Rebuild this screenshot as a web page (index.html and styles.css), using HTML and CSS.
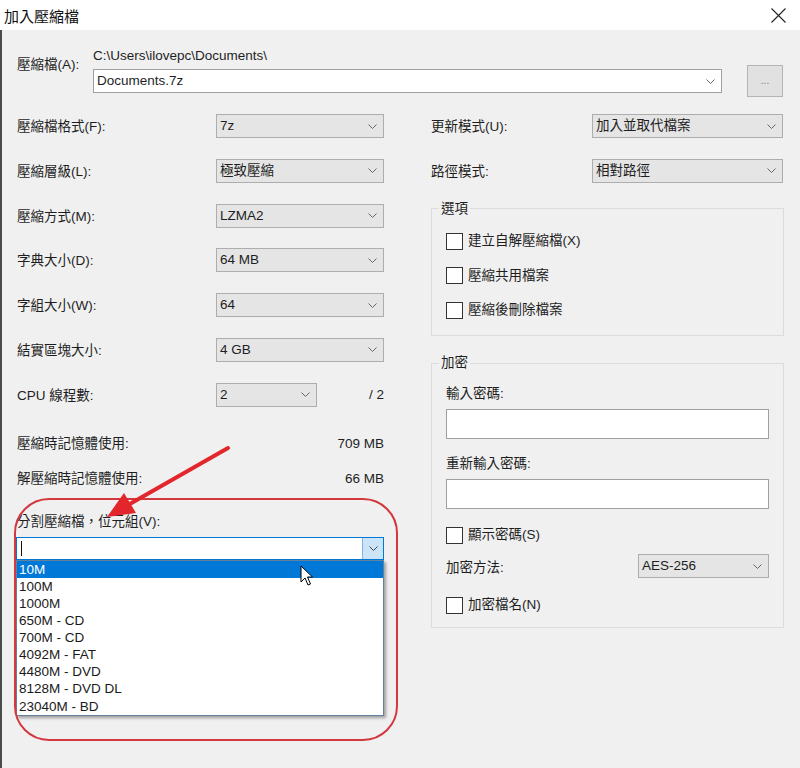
FILE: index.html
```html
<!DOCTYPE html>
<html lang="zh-Hant">
<head>
<meta charset="utf-8">
<title>加入壓縮檔</title>
<link rel="stylesheet" href="styles.css">
</head>
<body>
<div class="window">
  <div class="titlebar">
    <span class="title">加入壓縮檔</span>
    <svg class="close" width="15" height="15" viewBox="0 0 15 15"><path d="M0.5 0.5 L14.5 14.5 M14.5 0.5 L0.5 14.5" stroke="#222" stroke-width="1.1" fill="none"/></svg>
  </div>
  <div class="content">
    <div class="archive-row">
      <div class="archive-label">壓縮檔(A):</div>
      <div class="archive-main">
        <div class="path">C:\Users\ilovepc\Documents\</div>
        <div class="archive-controls">
          <div class="combo edit archive-combo"><span class="val">Documents.7z</span><svg class="chev" width="9" height="5" viewBox="0 0 9 5"><path d="M0.5 0.5 L4.5 4.5 L8.5 0.5" fill="none" stroke="#666" stroke-width="1"/></svg></div>
          <div class="browse">...</div>
        </div>
      </div>
    </div>

    <div class="columns">
      <div class="col-left">
        <div class="form-grid left-grid">
          <div class="lbl">壓縮檔格式(F):</div>
          <div class="combo"><span class="val">7z</span><svg class="chev" width="9" height="5" viewBox="0 0 9 5"><path d="M0.5 0.5 L4.5 4.5 L8.5 0.5" fill="none" stroke="#666" stroke-width="1"/></svg></div>
          <div class="lbl">壓縮層級(L):</div>
          <div class="combo"><span class="val">極致壓縮</span><svg class="chev" width="9" height="5" viewBox="0 0 9 5"><path d="M0.5 0.5 L4.5 4.5 L8.5 0.5" fill="none" stroke="#666" stroke-width="1"/></svg></div>
          <div class="lbl">壓縮方式(M):</div>
          <div class="combo"><span class="val">LZMA2</span><svg class="chev" width="9" height="5" viewBox="0 0 9 5"><path d="M0.5 0.5 L4.5 4.5 L8.5 0.5" fill="none" stroke="#666" stroke-width="1"/></svg></div>
          <div class="lbl">字典大小(D):</div>
          <div class="combo"><span class="val">64 MB</span><svg class="chev" width="9" height="5" viewBox="0 0 9 5"><path d="M0.5 0.5 L4.5 4.5 L8.5 0.5" fill="none" stroke="#666" stroke-width="1"/></svg></div>
          <div class="lbl">字組大小(W):</div>
          <div class="combo"><span class="val">64</span><svg class="chev" width="9" height="5" viewBox="0 0 9 5"><path d="M0.5 0.5 L4.5 4.5 L8.5 0.5" fill="none" stroke="#666" stroke-width="1"/></svg></div>
          <div class="lbl">結實區塊大小:</div>
          <div class="combo"><span class="val">4 GB</span><svg class="chev" width="9" height="5" viewBox="0 0 9 5"><path d="M0.5 0.5 L4.5 4.5 L8.5 0.5" fill="none" stroke="#666" stroke-width="1"/></svg></div>
          <div class="lbl">CPU 線程數:</div>
          <div class="cpu-cell">
            <div class="combo cpu-combo"><span class="val">2</span><svg class="chev" width="9" height="5" viewBox="0 0 9 5"><path d="M0.5 0.5 L4.5 4.5 L8.5 0.5" fill="none" stroke="#666" stroke-width="1"/></svg></div>
            <span class="cpu-max">/ 2</span>
          </div>
        </div>

        <div class="mem-row mem-first"><span>壓縮時記憶體使用:</span><span>709 MB</span></div>
        <div class="mem-row mem-second"><span>解壓縮時記憶體使用:</span><span>66 MB</span></div>

        <div class="split-label">分割壓縮檔，位元組(V):</div>
        <div class="split-wrap">
          <div class="split-combo">
            <span class="caret"></span>
            <span class="split-btn"><svg width="9" height="5" viewBox="0 0 9 5"><path d="M0.5 0.5 L4.5 4.5 L8.5 0.5" fill="none" stroke="#444" stroke-width="1"/></svg></span>
          </div>
          <ul class="split-list">
            <li class="sel">10M</li>
            <li>100M</li>
            <li>1000M</li>
            <li>650M - CD</li>
            <li>700M - CD</li>
            <li>4092M - FAT</li>
            <li>4480M - DVD</li>
            <li>8128M - DVD DL</li>
            <li>23040M - BD</li>
          </ul>
        </div>
      </div>

      <div class="col-right">
        <div class="form-grid right-grid">
          <div class="lbl">更新模式(U):</div>
          <div class="combo"><span class="val">加入並取代檔案</span><svg class="chev" width="9" height="5" viewBox="0 0 9 5"><path d="M0.5 0.5 L4.5 4.5 L8.5 0.5" fill="none" stroke="#666" stroke-width="1"/></svg></div>
          <div class="lbl">路徑模式:</div>
          <div class="combo"><span class="val">相對路徑</span><svg class="chev" width="9" height="5" viewBox="0 0 9 5"><path d="M0.5 0.5 L4.5 4.5 L8.5 0.5" fill="none" stroke="#666" stroke-width="1"/></svg></div>
        </div>

        <fieldset class="group options">
          <legend>選項</legend>
          <div class="check first"><span class="box"></span><span>建立自解壓縮檔(X)</span></div>
          <div class="check"><span class="box"></span><span>壓縮共用檔案</span></div>
          <div class="check"><span class="box"></span><span>壓縮後刪除檔案</span></div>
        </fieldset>

        <fieldset class="group encrypt">
          <legend>加密</legend>
          <div class="field-label pw1">輸入密碼:</div>
          <div class="textbox"></div>
          <div class="field-label pw2">重新輸入密碼:</div>
          <div class="textbox"></div>
          <div class="check show-pw"><span class="box"></span><span>顯示密碼(S)</span></div>
          <div class="method-row">
            <span>加密方法:</span>
            <div class="combo method-combo"><span class="val">AES-256</span><svg class="chev" width="9" height="5" viewBox="0 0 9 5"><path d="M0.5 0.5 L4.5 4.5 L8.5 0.5" fill="none" stroke="#666" stroke-width="1"/></svg></div>
          </div>
          <div class="check enc-names"><span class="box"></span><span>加密檔名(N)</span></div>
        </fieldset>
      </div>
    </div>
  </div>

  <svg class="annotation" width="800" height="768" viewBox="0 0 800 768">
    <rect x="15" y="499" width="382" height="241" rx="34" ry="34" fill="none" stroke="#d3383f" stroke-width="2"/>
    <line x1="228" y1="448" x2="128" y2="505" stroke="#e2262b" stroke-width="4" stroke-linecap="round"/>
    <polygon points="107,517 124,493 136,513" fill="#e2262b"/>
  </svg>

  <svg class="cursor" width="14" height="22" viewBox="0 0 14 22">
    <path d="M1 1 L1 17 L5 13 L8 20 L10.5 19 L7.5 12 L12.5 12 Z" fill="#fff" stroke="#000" stroke-width="1" stroke-linejoin="round"/>
  </svg>
</div>
</body>
</html>
```

FILE: styles.css
```css
* { box-sizing: border-box; }

html, body {
  margin: 0;
  padding: 0;
}

body {
  width: 800px;
  height: 768px;
  overflow: hidden;
  background: #f0f0f0;
  font-family: "Liberation Sans", "Noto Sans CJK TC", sans-serif;
  font-size: 13.5px;
  color: #1e1e1e;
}

.window {
  position: relative;
  width: 800px;
  height: 768px;
}

.titlebar {
  height: 30px;
  background: #fff;
  display: flex;
  align-items: center;
  justify-content: space-between;
  padding: 0 14px 0 4px;
}

.title {
  font-size: 15px;
  color: #111;
}

.close {
  display: block;
}

.content {
  height: 738px;
  border-left: 2px solid #4a4a4a;
  padding: 0 16px 0 15px;
}

/* archive row */
.archive-row {
  display: flex;
  padding-top: 17px;
}

.archive-label {
  width: 76px;
  line-height: 18px;
  margin-top: 9px;
}

.archive-main {
  flex: 1;
}

.path {
  line-height: 18px;
}

.archive-controls {
  display: flex;
  align-items: center;
  gap: 25px;
}

.browse {
  width: 36px;
  height: 32px;
  background: #e1e1e1;
  border: 1px solid #b4b4b4;
  color: #777;
  font-size: 10px;
  display: flex;
  align-items: center;
  justify-content: center;
  padding-bottom: 2px;
}

/* combos */
.combo {
  height: 24px;
  background: #e5e5e5;
  border: 1px solid #adadad;
  display: flex;
  align-items: center;
  justify-content: space-between;
  padding: 0 6px 0 3px;
}

.combo.edit {
  background: #fff;
  border-color: #a0a0a0;
}

.archive-combo {
  width: 629px;
  padding-right: 6px;
}

.val {
  line-height: 18px;
}

.chev {
  display: block;
  flex: none;
}

/* columns */
.columns {
  display: flex;
  gap: 47px;
  margin-top: 17px;
}

.col-left {
  width: 367px;
  display: flex;
  flex-direction: column;
}

.col-right {
  width: 353px;
  display: flex;
  flex-direction: column;
}

.form-grid {
  display: grid;
  row-gap: 20.8px;
  align-items: center;
}

.left-grid {
  grid-template-columns: 199px 168px;
}

.right-grid {
  grid-template-columns: 161px 191px;
}

.lbl {
  line-height: 18px;
  padding-top: 2px;
}

.cpu-cell {
  display: flex;
  align-items: center;
}

.cpu-combo {
  width: 101px;
}

.cpu-max {
  margin-left: auto;
}

.mem-row {
  display: flex;
  justify-content: space-between;
  line-height: 18px;
}

.mem-first {
  margin-top: 28px;
}

.mem-second {
  margin-top: 17px;
}

.split-label {
  line-height: 18px;
  margin-top: 25px;
}

.split-wrap {
  position: relative;
  margin-top: 6px;
  margin-left: -1px;
  width: 368px;
}

.split-combo {
  height: 23px;
  background: #fff;
  border: 1px solid #0078d7;
  display: flex;
  align-items: center;
  justify-content: space-between;
  padding-left: 4px;
}

.caret {
  width: 1px;
  height: 15px;
  background: #111;
}

.split-btn {
  width: 21px;
  height: 21px;
  background: #cce4f7;
  border-left: 1px solid #7eb4ea;
  display: flex;
  align-items: center;
  justify-content: center;
}

.split-list {
  position: absolute;
  left: 0;
  top: 100%;
  width: 368px;
  margin: 0;
  padding: 0;
  list-style: none;
  background: #fff;
  border: 1px solid #64819c;
  box-shadow: 2px 2px 3px rgba(0, 0, 0, 0.35);
}

.split-list li {
  height: 17.1px;
  line-height: 17.1px;
  padding-left: 2px;
  font-size: 13.5px;
  color: #1a1a1a;
}

.split-list li.sel {
  background: #0078d7;
  color: #fff;
}

/* group boxes */
.group {
  margin: 0;
  border: 1px solid #dcdcdc;
  padding: 0 14px 15px 14px;
  min-width: 0;
}

.group legend {
  padding: 0 2px;
  margin-left: -7px;
  line-height: 18px;
}

.options {
  margin-top: 17px;
}

.encrypt {
  margin-top: 18px;
  padding-bottom: 12px;
}

.check {
  display: flex;
  align-items: center;
  gap: 5px;
  height: 20px;
  line-height: 18px;
  margin-top: 14.5px;
}

.check.first {
  margin-top: 13.7px;
}

.box {
  width: 17px;
  height: 17px;
  background: #fff;
  border: 1px solid #333;
  flex: none;
}

.field-label {
  line-height: 18px;
}

.pw1 {
  margin-top: 13px;
}

.pw2 {
  margin-top: 16px;
}

.textbox {
  height: 30px;
  background: #fff;
  border: 1px solid #a0a0a0;
  margin-top: 6px;
  width: 323px;
}

.show-pw {
  margin-top: 16px;
}

.method-row {
  display: flex;
  align-items: center;
  justify-content: space-between;
  width: 323px;
  margin-top: 9px;
}

.method-combo {
  width: 131px;
}

.enc-names {
  margin-top: 17px;
}

/* overlays */
.annotation {
  position: absolute;
  left: 0;
  top: 0;
  pointer-events: none;
}

.cursor {
  position: absolute;
  left: 300px;
  top: 565px;
}
```
